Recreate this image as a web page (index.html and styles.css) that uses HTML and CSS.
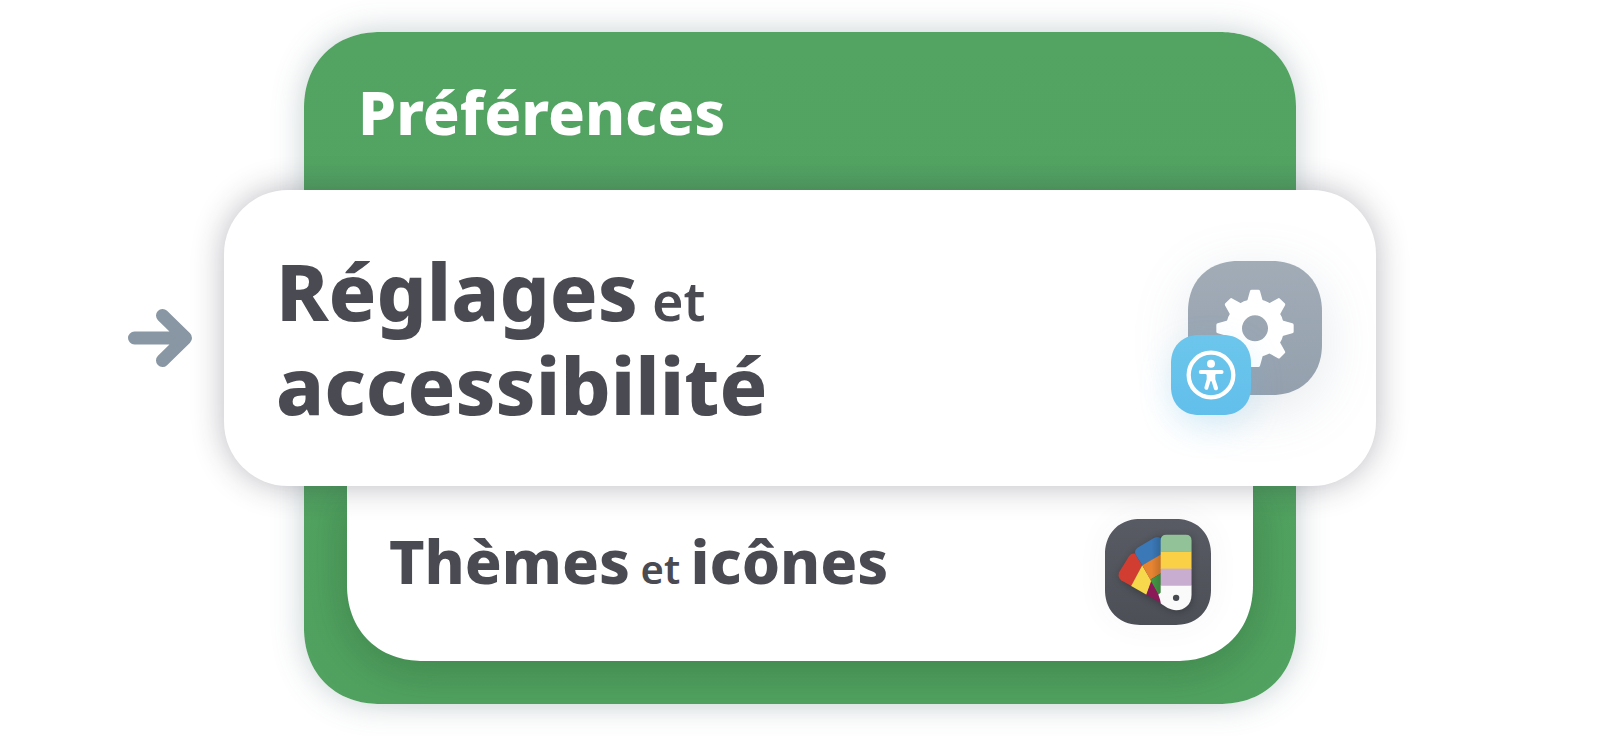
FILE: index.html
```html
<!DOCTYPE html>
<html lang="fr">
<head>
<meta charset="utf-8">
<meta name="viewport" content="width=device-width, initial-scale=1">
<title>Préférences</title>
<link rel="stylesheet" href="styles.css">
</head>
<body>
<main class="page">
  <section class="card">
    <h1 class="card-title">Préférences</h1>
    <div class="callout">
      <svg class="arrow" viewBox="0 0 64 58" aria-hidden="true">
        <path d="M6.500 29H56M34.500 6.500L57.500 29L34.500 51.500" fill="none" stroke="#8996a3" stroke-width="13" stroke-linecap="round" stroke-linejoin="round"/>
        <path d="M38 24L48 29L38 34Z" fill="#8996a3"/>
      </svg>
      <a class="row row-active" href="#reglages">
        <span class="label"><b>Réglages</b><span class="joiner"> et</span><br><b>accessibilité</b></span>
        <span class="icon icon-settings">
          <svg class="glyph" viewBox="0 0 402 402" aria-hidden="true">
            <defs><path id="tooth" d="M-24 -80L-15 -112Q-14 -116 -10 -116H10Q14 -116 15 -112L24 -80Z"/></defs>
            <g transform="translate(201 202)" fill="#fff">
              <circle r="63" fill="none" stroke="#fff" stroke-width="48"/>
              <use href="#tooth"/>
              <use href="#tooth" transform="rotate(45)"/>
              <use href="#tooth" transform="rotate(90)"/>
              <use href="#tooth" transform="rotate(135)"/>
              <use href="#tooth" transform="rotate(180)"/>
              <use href="#tooth" transform="rotate(225)"/>
              <use href="#tooth" transform="rotate(270)"/>
              <use href="#tooth" transform="rotate(315)"/>
            </g>
          </svg>
          <span class="badge">
            <svg class="glyph" viewBox="0 0 242 242" aria-hidden="true">
              <circle cx="121" cy="121" r="67.500" fill="none" stroke="#fff" stroke-width="13"/>
              <circle cx="121" cy="87" r="12" fill="#fff"/>
              <path d="M90 106H153A6 6 0 0 1 153 118H138Q134 118 134 122V134L142 159A6 6 0 0 1 130 163L123 141Q121 137 119 141L112 163A6 6 0 0 1 101 159L108 134V122Q108 118 104 118H90A6 6 0 0 1 90 106Z" fill="#fff"/>
            </svg>
          </span>
        </span>
      </a>
    </div>
    <a class="row row-next" href="#themes">
      <span class="label label-small"><b>Thèmes</b><span class="joiner"> et </span><b>icônes</b></span>
      <span class="icon icon-themes">
        <svg class="glyph" viewBox="77 57 316 316" aria-hidden="true">
          <defs>
            <filter id="soft" x="-40%" y="-40%" width="180%" height="180%"><feGaussianBlur stdDeviation="13"/></filter>
            <linearGradient id="fold" x1="0" x2="1"><stop offset="0" stop-color="#000" stop-opacity="0"/><stop offset="1" stop-color="#000" stop-opacity=".16"/></linearGradient>
          </defs>
          <path d="M118 230L166 158L238 112H335V290Q325 340 280 330L156 262Z" fill="#000" opacity=".3" filter="url(#soft)"/>
          <path d="M188 195L166 160Q156 158 149 167L119 216Q114 231 126 240L156 257Z" fill="#d23d31"/>
          <path d="M188 195L216 243L201 283L155 257Z" fill="#f7d84c"/>
          <path d="M215 241L247 300L245 308L200 283Z" fill="#8b1958"/>
          <path d="M188 195L168 163Q163 151 174 143L224 113Q234 108 244 114V165Z" fill="#3b78b7"/>
          <path d="M188 195L244 163V219L212 238Z" fill="#e68432"/>
          <path d="M212 238L244 219V278L238 284Z" fill="#459846"/>
          <path d="M216 110H244V290L216 244Z" fill="url(#fold)"/>
          <path d="M236 282L244 276V306Z" fill="#fafafa"/>
          <path d="M243 155V121Q243 104 260 104H318Q335 104 335 121V155Z" fill="#92c398"/>
          <path d="M243 154H335V206H243Z" fill="#f9d046"/>
          <path d="M243 205H335V256H243Z" fill="#c9add0"/>
          <path d="M243 255H335V283C335 312 315 329 289 329C272 329 254 317 243 308Z" fill="#fafafa"/>
          <circle cx="289" cy="292" r="9.500" fill="#484a51"/>
        </svg>
      </span>
    </a>
  </section>
</main>
</body>
</html>
```
FILE: styles.css
```css
* {
  box-sizing: border-box;
}

body {
  margin: 0;
  background: #fff;
  color: #4a4a52;
  font-family: "Noto Sans", "Open Sans", sans-serif;
}

.page {
  display: flex;
  justify-content: center;
  align-items: center;
  min-height: 100vh;
  padding: 32px 0;
}

.card {
  width: 62%;
  padding: 0 43px 43px;
  border-radius: 72px;
  background: linear-gradient(#53a463, #51a260);
  box-shadow: 0 0 32px rgba(70, 100, 110, 0.3);
}

.card-title {
  margin: 0;
  padding: 40px 11px 38px;
  color: #fff;
  font-size: 61px;
  line-height: 80px;
  font-weight: 800;
}

.callout {
  position: relative;
  z-index: 1;
  display: flex;
  align-items: center;
  gap: 32px;
  margin: 0 -123px 0 -219px;
}

.arrow {
  flex: none;
  width: 64px;
  height: 58px;
}

.row {
  display: flex;
  align-items: center;
  justify-content: space-between;
  background: #fff;
  color: inherit;
  text-decoration: none;
}

.row-active {
  flex: 1;
  padding: 54px 54px 54px 52px;
  border-radius: 64px;
  box-shadow: 0 0 32px rgba(40, 40, 60, 0.32);
}

.row-next {
  padding: 33px 42px 36px;
  border-radius: 0 0 72px 72px;
  box-shadow: 0 8px 48px rgba(20, 60, 30, 0.3);
}

.label {
  font-size: 79px;
  line-height: 94px;
}

.label b {
  font-weight: 800;
}

.joiner {
  font-size: 54px;
  line-height: 1;
  font-weight: 600;
}

.label-small {
  margin-bottom: 22px;
  font-size: 61px;
  line-height: 80px;
}

.label-small .joiner {
  font-size: 40px;
}

.icon {
  position: relative;
  flex: none;
}

.glyph {
  display: block;
  width: 100%;
  height: 100%;
}

.icon-settings {
  width: 134px;
  height: 134px;
  margin-top: -20px;
  border-radius: 48px;
  background: linear-gradient(#a1acb7, #95a0ae);
  box-shadow: 0 14px 56px rgba(120, 140, 160, 0.2);
}

.badge {
  position: absolute;
  left: -17px;
  bottom: -20px;
  width: 80px;
  height: 80px;
  border-radius: 27px;
  background: linear-gradient(#6cc6ec, #62bfeb);
  box-shadow: 0 12px 32px rgba(98, 191, 235, 0.22);
}

.icon-themes {
  width: 106px;
  height: 106px;
  border-radius: 34px;
  background: linear-gradient(#585b63, #4d4f57);
  box-shadow: 0 0 32px rgba(80, 80, 90, 0.05);
}

@supports (corner-shape: superellipse(1.1)) {
  .card,
  .row-next,
  .icon-settings,
  .badge,
  .icon-themes {
    corner-shape: superellipse(1.1);
  }

  .card {
    border-radius: 76px;
  }

  .row-next {
    border-radius: 0 0 76px 76px;
  }

  .icon-settings {
    border-radius: 50px;
  }

  .badge {
    border-radius: 28px;
  }

  .icon-themes {
    border-radius: 35px;
  }
}
```
